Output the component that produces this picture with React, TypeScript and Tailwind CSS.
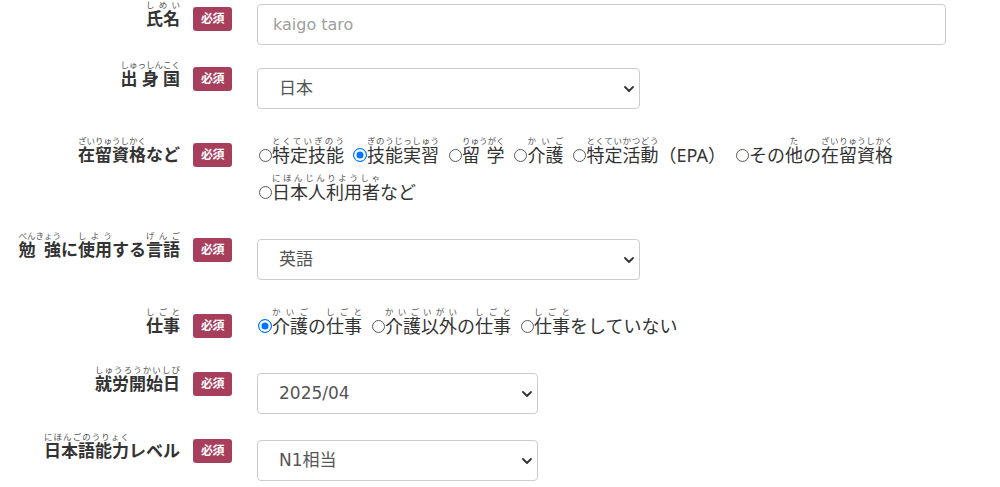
import React from 'react';

type Seg = string | [string, string];

function Ruby({ segs, base }: { segs: Seg[]; base: string }) {
  return (
    <span className="flex items-start">
      {segs.map((s, i) => {
        const b = typeof s === 'string' ? s : s[0];
        const t = typeof s === 'string' ? '' : s[1];
        return (
          <span key={i} className="flex flex-col">
            <span
              className={`h-[9px] whitespace-nowrap text-[8.5px] leading-[9px] font-normal text-[#555] ${
                t.length > 1 ? 'text-justify [text-align-last:justify]' : 'text-center'
              }`}
            >
              {t}
            </span>
            <span className={`whitespace-nowrap ${base} ${t ? 'text-justify [text-align-last:justify]' : ''}`}>{b}</span>
          </span>
        );
      })}
    </span>
  );
}

function Badge() {
  return (
    <span className="ml-[13px] mt-[7px] flex h-[24px] w-[39px] shrink-0 items-center justify-center rounded-[3px] bg-[#a63e5c] text-[12px] font-bold tracking-[-0.5px] text-white">
      必須
    </span>
  );
}

function Label({ segs }: { segs: Seg[] }) {
  return (
    <div className="flex w-[232px] shrink-0 items-start justify-end">
      <Ruby segs={segs} base="text-[17px] leading-[20px] font-bold text-[#333]" />
      <Badge />
    </div>
  );
}

function Chevron() {
  return (
    <svg className="pointer-events-none absolute right-[6px] top-1/2 -translate-y-1/2" width="10" height="6" viewBox="0 0 10 6" fill="none">
      <path d="M1 1l4 4 4-4" stroke="#333" strokeWidth="1.8" strokeLinecap="round" strokeLinejoin="round" />
    </svg>
  );
}

function Select({ value, width }: { value: string; width: string }) {
  return (
    <div className={`relative ml-[25px] mt-[8px] h-[41px] ${width}`}>
      <select
        defaultValue={value}
        className="h-full w-full appearance-none rounded-[4px] border border-[#ccc] bg-white pl-[21px] font-['DejaVu_Sans','Noto_Sans_CJK_JP',sans-serif] text-[17px] text-[#555] outline-none"
      >
        <option>{value}</option>
      </select>
      <Chevron />
    </div>
  );
}

function Option({ segs, checked, name }: { segs: Seg[]; checked?: boolean; name: string }) {
  return (
    <label className="flex items-start">
      <span className="ml-[1px] mt-[12px] flex h-[14px] w-[14px] shrink-0 items-center justify-center">
        <input type="radio" name={name} defaultChecked={checked} className="peer sr-only" />
        <span className="block h-[13px] w-[13px] shrink-0 rounded-full border-[1.5px] border-[#5a5a5a] bg-white peer-checked:h-[14px] peer-checked:w-[14px] peer-checked:border-[#0075ff] peer-checked:bg-[#0075ff] peer-checked:shadow-[inset_0_0_0_2.5px_#fff]" />
      </span>
      <Ruby segs={segs} base="text-[18px] leading-[20px] text-[#333]" />
    </label>
  );
}

export default function App() {
  return (
    <div className="h-[487px] w-[1000px] overflow-hidden bg-white font-['Noto_Sans','Noto_Sans_CJK_JP',sans-serif]">
      <div className="flex items-start">
        <Label segs={[['氏名', 'しめい']]} />
        <input
          type="text"
          placeholder="kaigo taro"
          className="ml-[25px] mt-[4px] h-[41px] w-[689px] rounded-[4px] border border-[#ccc] px-[15px] font-['DejaVu_Sans',sans-serif] text-[16px] text-[#555] outline-none placeholder:text-[#a0a0a0]"
        />
      </div>

      <div className="mt-[15px] flex items-start">
        <Label segs={[['出身国', 'しゅっしんこく']]} />
        <Select value="日本" width="w-[383px]" />
      </div>

      <div className="mt-[27px] flex items-start">
        <Label segs={[['在留資格', 'ざいりゅうしかく'], 'など']} />
        <div className="ml-[25px] flex w-[689px] flex-wrap gap-x-[8px] gap-y-[8px]">
          <Option name="status" segs={[['特定技能', 'とくていぎのう']]} />
          <Option name="status" checked segs={[['技能実習', 'ぎのうじっしゅう']]} />
          <Option name="status" segs={[['留学', 'りゅうがく']]} />
          <Option name="status" segs={[['介護', 'かいご']]} />
          <Option name="status" segs={[['特定活動', 'とくていかつどう'], '（EPA）']} />
          <Option name="status" segs={['その', ['他', 'た'], 'の', ['在留資格', 'ざいりゅうしかく']]} />
          <Option name="status" segs={[['日本人利用者', 'にほんじんりようしゃ'], 'など']} />
        </div>
      </div>

      <div className="mt-[29px] flex items-start">
        <Label segs={[['勉強', 'べんきょう'], 'に', ['使用', 'しよう'], 'する', ['言語', 'げんご']]} />
        <Select value="英語" width="w-[383px]" />
      </div>

      <div className="mt-[27px] flex items-start">
        <Label segs={[['仕事', 'しごと']]} />
        <div className="ml-[25px] flex w-[689px] flex-wrap gap-x-[8px] gap-y-[8px]">
          <Option name="job" checked segs={[['介護', 'かいご'], 'の', ['仕事', 'しごと']]} />
          <Option name="job" segs={[['介護以外', 'かいごいがい'], 'の', ['仕事', 'しごと']]} />
          <Option name="job" segs={[['仕事', 'しごと'], 'をしていない']} />
        </div>
      </div>

      <div className="mt-[27px] flex items-start">
        <Label segs={[['就労開始日', 'しゅうろうかいしび']]} />
        <Select value="2025/04" width="w-[281px]" />
      </div>

      <div className="mt-[18px] flex items-start">
        <Label segs={[['日本語能力', 'にほんごのうりょく'], 'レベル']} />
        <Select value="N1相当" width="w-[281px]" />
      </div>
    </div>
  );
}
